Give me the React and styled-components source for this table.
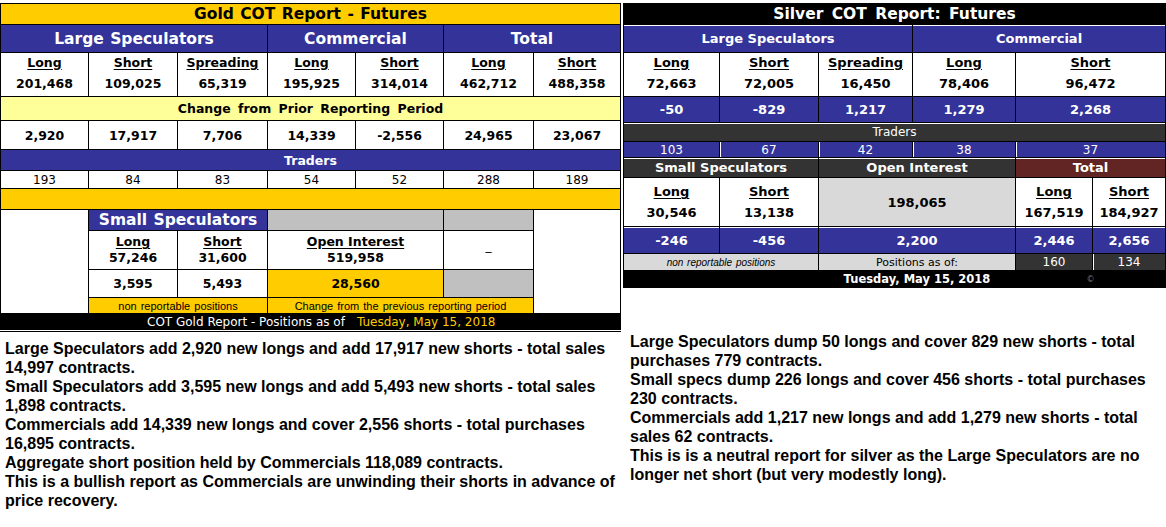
import React from "react"
import styled, { createGlobalStyle } from "styled-components"

const GOLD = "#FFCC00"
const BLUE = "#333399"
const PALE = "#FFFF99"
const GRAY = "#C0C0C0"
const DARK = "#333333"
const LIGHT = "#D9D9D9"
const WINE = "#632523"

const GlobalStyle = createGlobalStyle`
  body {
    margin: 0;
    background: #fff;
    font-family: "DejaVu Sans", Verdana, sans-serif;
  }
`

const Page = styled.div`
  display: flex;
  align-items: flex-start;
  width: 1166px;
  padding-top: 3px;
`

const Column = styled.div`
  display: flex;
  flex-direction: column;
  width: ${p => p.$width}px;
  margin-left: ${p => p.$offset || 0}px;
`

const Grid = styled.div`
  display: grid;
  grid-template-columns: ${p => p.$cols};
  grid-template-rows: ${p => p.$rows};
  gap: 1px;
  padding: 1px;
  background: #000;
`

const Cell = styled.div`
  grid-column: span ${p => p.$span || 1};
  grid-row: span ${p => p.$down || 1};
  display: flex;
  flex-direction: column;
  align-items: center;
  justify-content: center;
  background: ${p => p.$bg || "#fff"};
  color: ${p => p.$fg || "#000"};
  font-size: ${p => p.$size || 12.5}px;
  font-weight: bold;
  white-space: nowrap;
  overflow: hidden;
  box-shadow: ${p =>
    p.$topLine ? "inset 0 1px 0 #fff" : p.$leftLine ? "inset 1px 0 0 #fff" : "none"};
`

const TitleCell = styled(Cell)`
  font-size: 15.5px;
  word-spacing: 1px;
`

const PlainCell = styled(Cell)`
  font-weight: normal;
  font-size: ${p => p.$size || 12}px;
`

const CaptionCell = styled(Cell)`
  font-family: "Liberation Sans", Arial, sans-serif;
  font-weight: normal;
  font-size: ${p => p.$size || 11}px;
  font-style: ${p => (p.$italic ? "italic" : "normal")};
  word-spacing: 1px;
`

const StackCell = styled(Cell)`
  line-height: ${p => p.$lh || 21}px;
  padding-bottom: ${p => p.$lift || 0}px;
`

const Label = styled.span`
  text-decoration: underline;
  text-underline-offset: 2px;
`

const Value = styled.span``

const Blank = styled.span`
  font-weight: normal;
  font-size: 12px;
  padding-bottom: 8px;
`

const FooterWrap = styled.div`
  background: #fff;
  padding-bottom: 1px;
  border-bottom: 1px solid #000;
`

const FooterBar = styled.div`
  display: flex;
  align-items: center;
  gap: 12px;
  height: 16px;
  padding-left: 147px;
  background: #000;
  font-size: 12px;
  color: #fff;
  white-space: nowrap;
`

const DateText = styled.span`
  color: ${GOLD};
`

const Copy = styled.span`
  font-weight: normal;
  font-size: 8px;
  color: #777;
`

const Notes = styled.div`
  margin-top: ${p => p.$top}px;
  margin-left: ${p => p.$left}px;
  width: ${p => p.$width}px;
  font-family: "Liberation Sans", Arial, sans-serif;
  font-weight: bold;
  font-size: 16px;
  line-height: 19px;
  color: #000;
`

const Line = styled.p`
  margin: 0;
`

const Stack = ({ label, value, ...rest }) => (
  <StackCell {...rest}>
    <Label>{label}</Label>
    <Value>{value}</Value>
  </StackCell>
)

function GoldTable() {
  const positions = [
    ["Long", "201,468"],
    ["Short", "109,025"],
    ["Spreading", "65,319"],
    ["Long", "195,925"],
    ["Short", "314,014"],
    ["Long", "462,712"],
    ["Short", "488,358"],
  ]
  const changes = ["2,920", "17,917", "7,706", "14,339", "-2,556", "24,965", "23,067"]
  const traders = ["193", "84", "83", "54", "52", "288", "189"]

  return (
    <FooterWrap>
      <Grid
        $cols="87px 88px 89px 87px 87px 89px 86px"
        $rows="20px 27px 43px 23px 28px 20px 17px 20px 20px 38px 27px 15px"
      >
        <TitleCell $span={7} $bg={GOLD}>Gold COT Report - Futures</TitleCell>

        <TitleCell $span={3} $bg={BLUE} $fg="#fff">Large Speculators</TitleCell>
        <TitleCell $span={2} $bg={BLUE} $fg="#fff">Commercial</TitleCell>
        <TitleCell $span={2} $bg={BLUE} $fg="#fff">Total</TitleCell>

        {positions.map(([l, v], i) => (
          <Stack key={i} $lift={4} label={l} value={v} />
        ))}

        <Cell $span={7} $bg={PALE} style={{ wordSpacing: "3px" }}>
          Change from Prior Reporting Period
        </Cell>

        {changes.map((v, i) => (
          <Cell key={i}>{v}</Cell>
        ))}

        <Cell $span={7} $bg={BLUE} $fg="#fff">Traders</Cell>

        {traders.map((v, i) => (
          <PlainCell key={i}>{v}</PlainCell>
        ))}

        <Cell $span={7} $bg={GOLD} />

        <Cell $down={4} />
        <TitleCell $span={2} $bg={BLUE} $fg="#fff">Small Speculators</TitleCell>
        <Cell $span={2} $bg={GRAY} />
        <Cell $bg={GRAY} />
        <Cell $down={4} />

        <Stack $lh={16} label="Long" value="57,246" />
        <Stack $lh={16} label="Short" value="31,600" />
        <Stack $lh={16} $span={2} label="Open Interest" value="519,958" />
        <Cell>
          <Blank>_</Blank>
        </Cell>

        <Cell>3,595</Cell>
        <Cell>5,493</Cell>
        <Cell $span={2} $bg={GOLD}>28,560</Cell>
        <Cell $bg={GRAY} />

        <CaptionCell $span={2} $bg={GOLD}>non reportable positions</CaptionCell>
        <CaptionCell $span={3} $bg={GOLD}>Change from the previous reporting period</CaptionCell>
      </Grid>
      <FooterBar>
        <span>COT Gold Report - Positions as of</span>
        <DateText>Tuesday, May 15, 2018</DateText>
      </FooterBar>
    </FooterWrap>
  )
}

function SilverTable() {
  const blueRow = ["-50", "-829", "1,217", "1,279"]
  const traders = ["103", "67", "42", "38"]

  return (
    <Grid
      $cols="95px 98px 93px 102px 76px 72px"
      $rows="20px 27px 43px 25px 18px 15px 19px 48px 26px 16px 16px"
    >
      <TitleCell $span={6} $bg="#000" $fg="#fff" style={{ wordSpacing: "3px" }}>
        Silver COT Report: Futures
      </TitleCell>

      <Cell $span={3} $bg={BLUE} $fg="#fff" $size={13} $topLine>Large Speculators</Cell>
      <Cell $span={3} $bg={BLUE} $fg="#fff" $size={13} $topLine>Commercial</Cell>

      <Stack $size={13} $lift={4} label="Long" value="72,663" />
      <Stack $size={13} $lift={4} label="Short" value="72,005" />
      <Stack $size={13} $lift={4} label="Spreading" value="16,450" />
      <Stack $size={13} $lift={4} label="Long" value="78,406" />
      <Stack $size={13} $lift={4} $span={2} label="Short" value="96,472" />

      {blueRow.map((v, i) => (
        <Cell key={i} $bg={BLUE} $fg="#fff" $size={13}>{v}</Cell>
      ))}
      <Cell $span={2} $bg={BLUE} $fg="#fff" $size={13}>2,268</Cell>

      <PlainCell $span={6} $bg={DARK} $fg="#fff" $topLine>Traders</PlainCell>

      {traders.map((v, i) => (
        <PlainCell key={i} $bg={BLUE} $fg="#fff" $leftLine={i > 0}>{v}</PlainCell>
      ))}
      <PlainCell $span={2} $bg={BLUE} $fg="#fff" $leftLine>37</PlainCell>

      <Cell $span={2} $bg={DARK} $fg="#fff" $size={13} $topLine>Small Speculators</Cell>
      <Cell $span={2} $bg={DARK} $fg="#fff" $size={13} $topLine>Open Interest</Cell>
      <Cell $span={2} $bg={WINE} $fg="#fff" $size={13} $topLine>Total</Cell>

      <Stack $size={13} label="Long" value="30,546" />
      <Stack $size={13} label="Short" value="13,138" />
      <Cell $span={2} $bg={LIGHT} $size={13}>198,065</Cell>
      <Stack $size={13} label="Long" value="167,519" />
      <Stack $size={13} label="Short" value="184,927" />

      <Cell $bg={BLUE} $fg="#fff" $size={13} $topLine>-246</Cell>
      <Cell $bg={BLUE} $fg="#fff" $size={13} $topLine>-456</Cell>
      <Cell $span={2} $bg={BLUE} $fg="#fff" $size={13} $topLine>2,200</Cell>
      <Cell $bg={BLUE} $fg="#fff" $size={13} $topLine>2,446</Cell>
      <Cell $bg={BLUE} $fg="#fff" $size={13} $topLine>2,656</Cell>

      <CaptionCell $span={2} $bg={LIGHT} $size={10} $italic>non reportable positions</CaptionCell>
      <PlainCell $span={2} $bg={LIGHT} $size={11}>Positions as of:</PlainCell>
      <PlainCell $bg={DARK} $fg="#fff">160</PlainCell>
      <PlainCell $bg={DARK} $fg="#fff" $leftLine>134</PlainCell>

      <Cell $span={2} $bg="#000" />
      <Cell $span={2} $bg="#000" $fg="#fff" $size={11.5}>Tuesday, May 15, 2018</Cell>
      <Cell $span={2} $bg="#000">
        <Copy>©</Copy>
      </Cell>
    </Grid>
  )
}

export default function App() {
  return (
    <>
      <GlobalStyle />
      <Page>
        <Column $width={621}>
          <GoldTable />
          <Notes $top={7} $left={5} $width={612}>
            <Line>
              Large Speculators add 2,920 new longs and add 17,917 new shorts - total sales 14,997
              contracts.
            </Line>
            <Line>
              Small Speculators add 3,595 new longs and add 5,493 new shorts - total sales 1,898
              contracts.
            </Line>
            <Line>
              Commercials add 14,339 new longs and cover 2,556 shorts - total purchases 16,895
              contracts.
            </Line>
            <Line>Aggregate short position held by Commercials 118,089 contracts.</Line>
            <Line>
              This is a bullish report as Commercials are unwinding their shorts in advance of
              price recovery.
            </Line>
          </Notes>
        </Column>
        <Column $width={543} $offset={2}>
          <SilverTable />
          <Notes $top={44} $left={7} $width={520}>
            <Line>
              Large Speculators dump 50 longs and cover 829 new shorts - total purchases 779
              contracts.
            </Line>
            <Line>
              Small specs dump 226 longs and cover 456 shorts - total purchases 230 contracts.
            </Line>
            <Line>
              Commercials add 1,217 new longs and add 1,279 new shorts - total sales 62
              contracts.
            </Line>
            <Line>
              This is is a neutral report for silver as the Large Speculators are no longer net
              short (but very modestly long).
            </Line>
          </Notes>
        </Column>
      </Page>
    </>
  )
}
